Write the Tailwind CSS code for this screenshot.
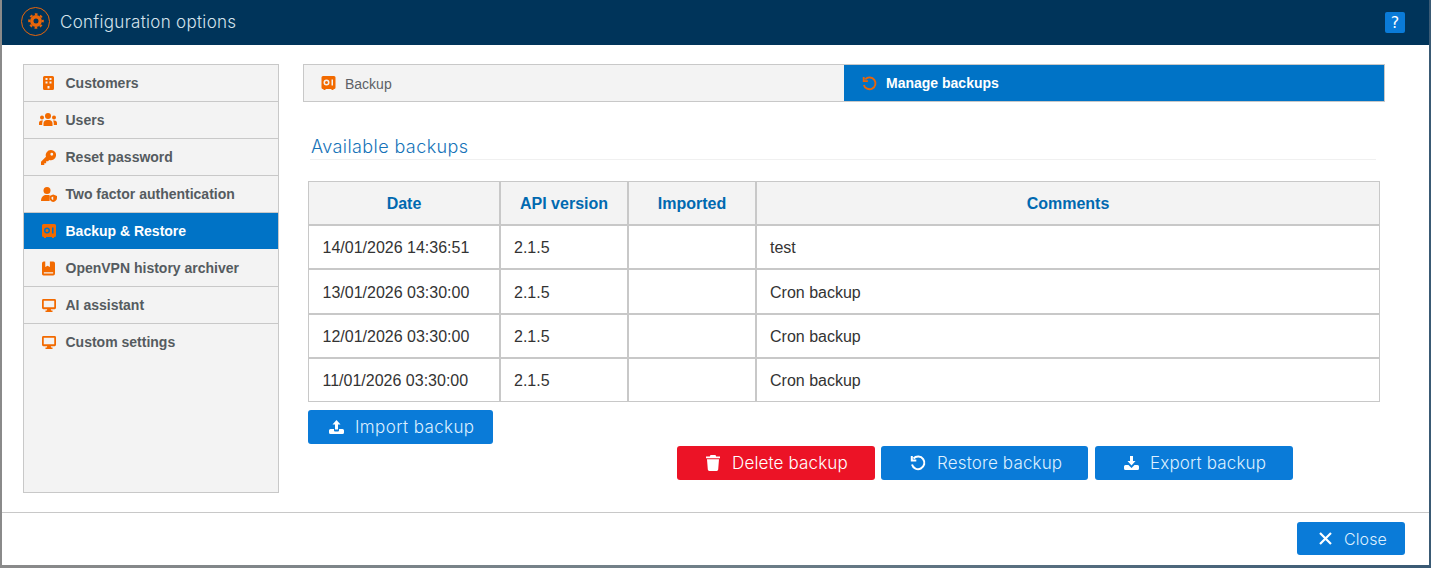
<!DOCTYPE html>
<html>
<head>
<meta charset="utf-8">
<script src="https://cdn.jsdelivr.net/npm/@tailwindcss/browser@4"></script>
</head>
<body class="w-[1431px] h-[568px] overflow-hidden bg-linear-to-r from-[#8a8a8a] via-[#6f7f88] to-[#3a5a74] font-['Liberation_Sans',sans-serif]">
<div class="ml-[2px] w-[1427px] h-[565px] bg-white flex flex-col">
  <header class="h-[45px] shrink-0 bg-[#00345a] flex items-center pl-[19px] pr-[24px]">
    <span class="w-[29px] h-[29px] mb-[3px] rounded-full border border-[#e8650a] flex items-center justify-center">
      <svg class="w-[16px] h-[16px]" viewBox="0 0 16 16"><g fill="none" stroke="#e8650a"><circle cx="8" cy="8" r="4.200" stroke-width="3.400"/><circle cx="8" cy="8" r="6.800" stroke-width="2" stroke-dasharray="2.700 2.640" stroke-dashoffset="1.350"/></g></svg>
    </span>
    <span class="ml-[10px] text-[17px] tracking-[0.3px] font-light text-[#d5e3ec] font-['Inter',sans-serif]">Configuration options</span>
    <span class="ml-auto w-[20px] h-[21px] rounded-[2px] bg-[#0a7bd8] flex items-center justify-center text-white text-[16px] font-['DejaVu_Sans',sans-serif]">?</span>
  </header>

  <main class="flex-1 flex pl-[21px] pr-[44px] pt-[19px] gap-[24px] min-h-0">
    <nav class="w-[256px] h-[429px] shrink-0 bg-[#f3f3f3] border border-[#c8c8c8] flex flex-col text-[14px] font-bold text-[#555b60]">
      <a class="h-[37px] shrink-0 flex items-center border-b border-[#c8c8c8]"><span class="w-[41.500px] flex justify-end pr-[11.500px]"><svg class="w-[11px] h-[14px]" viewBox="0 0 11 14"><path fill="#f26a00" fill-rule="evenodd" d="M1.500 0h8A1.500 1.500 0 0 1 11 1.500v11A1.500 1.500 0 0 1 9.500 14h-8A1.500 1.500 0 0 1 0 12.500v-11A1.500 1.500 0 0 1 1.500 0zM2.500 2v2h2V2zM6.500 2v2h2V2zM2.500 5.500v2h2v-2zM6.500 5.500v2h2v-2zM4.500 10v2.500h2V10z"/></svg></span>Customers</a>
      <a class="h-[37px] shrink-0 flex items-center border-b border-[#c8c8c8]"><span class="w-[41.500px] flex justify-end pr-[8.500px]"><svg class="w-[18px] h-[14px]" viewBox="0 0 18 14"><g fill="#f26a00"><circle cx="9" cy="3" r="3"/><path d="M4.500 13v-2.500C4.500 8.500 6 7 8 7h2c2 0 3.500 1.500 3.500 3.500V13z"/><circle cx="3" cy="4.500" r="2"/><circle cx="15" cy="4.500" r="2"/><path d="M0 12v-2c0-1.500 1-2.500 2.500-2.500H4C3.400 8.300 3.200 9.300 3.200 12zM18 12v-2c0-1.500-1-2.500-2.500-2.500H14c.6.8.8 1.800.8 4.500z"/></g></svg></span>Users</a>
      <a class="h-[37px] shrink-0 flex items-center border-b border-[#c8c8c8]"><span class="w-[41.500px] flex justify-end pr-[9.500px]"><svg class="w-[15px] h-[15px]" viewBox="0 0 16 16"><path fill="#f26a00" fill-rule="evenodd" d="M10.500 0a5.500 5.500 0 1 1-1.700 10.700L7.500 12H5.500v2H3.500v2H0v-3.500l5.300-5.300A5.500 5.500 0 0 1 10.500 0zM11.500 3a1.500 1.500 0 1 0 0 3 1.500 1.500 0 0 0 0-3z"/></svg></span>Reset password</a>
      <a class="h-[37px] shrink-0 flex items-center border-b border-[#c8c8c8]"><span class="w-[41.500px] flex justify-end pr-[8.500px]"><svg class="w-[16px] h-[15px]" viewBox="0 0 16 15"><g fill="#f26a00"><circle cx="6" cy="3.500" r="3.500"/><path d="M0 14c0-3.500 2-6 5-6h2.500c.4 0 .8.100 1.100.200V14z"/><path fill-rule="evenodd" d="M12.200 7.500 16 9v2c0 2-1.500 3.500-3.800 4-2.300-.5-3.700-2-3.700-4V9zM12.200 9.500 10.500 10.200v.9c0 1 .6 1.700 1.700 2z"/></g></svg></span>Two factor authentication</a>
      <a class="h-[37px] shrink-0 flex items-center bg-[#0073c6] text-white border-b border-[#f3f3f3]"><span class="w-[41.500px] flex justify-end pr-[9.500px]"><svg class="w-[14px] h-[14px]" viewBox="0 0 14 14"><path fill="#f26a00" fill-rule="evenodd" d="M1.500 0h11A1.500 1.500 0 0 1 14 1.500v10a1.500 1.500 0 0 1-1.500 1.500h-.5v1h-2v-1H4v1H2v-1h-.5A1.500 1.500 0 0 1 0 11.500v-10A1.500 1.500 0 0 1 1.500 0zM5 3.500a3 3 0 1 0 0 6 3 3 0 0 0 0-6zM5 5a1.500 1.500 0 1 1 0 3 1.500 1.500 0 0 1 0-3zM10 3.500v6h1.500v-6z"/></svg></span>Backup &amp; Restore</a>
      <a class="h-[37px] shrink-0 flex items-center border-b border-[#c8c8c8]"><span class="w-[41.500px] flex justify-end pr-[10.500px]"><svg class="w-[13px] h-[15px]" viewBox="0 0 14 15"><path fill="#f26a00" fill-rule="evenodd" d="M2 0h1.500v6L6 4.500 8.500 6V0H12a2 2 0 0 1 2 2v11a2 2 0 0 1-2 2H1.500A1.500 1.500 0 0 1 0 13.500V2a2 2 0 0 1 2-2zM2 11.500V13h10v-1.500z"/></svg></span>OpenVPN history archiver</a>
      <a class="h-[37px] shrink-0 flex items-center border-b border-[#c8c8c8]"><span class="w-[41.500px] flex justify-end pr-[9.500px]"><svg class="w-[14px] h-[13px]" viewBox="0 0 16 14" preserveAspectRatio="none"><path fill="#f26a00" fill-rule="evenodd" d="M1.500 0h13A1.500 1.500 0 0 1 16 1.500v8a1.500 1.500 0 0 1-1.500 1.500H10l.5 1.500H12V14H4v-1.500h1.500L6 11H1.500A1.500 1.500 0 0 1 0 9.500v-8A1.500 1.500 0 0 1 1.500 0zM2 2v7h12V2z"/></svg></span>AI assistant</a>
      <a class="h-[37px] shrink-0 flex items-center"><span class="w-[41.500px] flex justify-end pr-[9.500px]"><svg class="w-[14px] h-[13px]" viewBox="0 0 16 14" preserveAspectRatio="none"><path fill="#f26a00" fill-rule="evenodd" d="M1.500 0h13A1.500 1.500 0 0 1 16 1.500v8a1.500 1.500 0 0 1-1.500 1.500H10l.5 1.500H12V14H4v-1.500h1.500L6 11H1.500A1.500 1.500 0 0 1 0 9.500v-8A1.500 1.500 0 0 1 1.500 0zM2 2v7h12V2z"/></svg></span>Custom settings</a>
    </nav>

    <section class="w-[1082px] shrink-0 flex flex-col">
      <div class="h-[38px] flex border border-[#c8c8c8] text-[14px]">
        <div class="w-[540px] bg-[#f3f3f3] flex items-center pl-[17px] text-[#5c6166]">
          <svg class="w-[15px] h-[14px] mr-[9px]" viewBox="0 0 14 14"><path fill="#f26a00" fill-rule="evenodd" d="M1.500 0h11A1.500 1.500 0 0 1 14 1.500v10a1.500 1.500 0 0 1-1.500 1.500h-.5v1h-2v-1H4v1H2v-1h-.5A1.500 1.500 0 0 1 0 11.500v-10A1.500 1.500 0 0 1 1.500 0zM5 3.500a3 3 0 1 0 0 6 3 3 0 0 0 0-6zM5 5a1.500 1.500 0 1 1 0 3 1.500 1.500 0 0 1 0-3zM10 3.500v6h1.500v-6z"/></svg>
          <span class="pt-[2px]">Backup</span>
        </div>
        <div class="flex-1 bg-[#0073c6] flex items-center pl-[18px] font-bold text-white">
          <svg class="w-[15px] h-[15px] mr-[9px]" viewBox="0 0 16 16"><path fill="none" stroke="#e8650a" stroke-width="2" d="M3.500 3.500 A6.300 6.300 0 1 1 2 9.500M1.800 1v4.500h4.500"/></svg>
          Manage backups
        </div>
      </div>

      <div class="ml-[7px] mr-[9px] mt-[33px] h-[25px] pl-[1px] border-b border-[#f0f0f0] text-[#1673b8] text-[18px] font-light tracking-[0.4px] leading-[24px] font-['Inter',sans-serif]">Available backups</div>

      <table class="ml-[5px] mt-[21px] w-[1072px] border-separate border-spacing-0 table-fixed text-[16px] text-[#333]">
        <colgroup><col class="w-[192px]"><col class="w-[128px]"><col class="w-[128px]"><col></colgroup>
        <thead>
          <tr class="h-[44px] bg-[#f3f3f3] text-[#0069b0] font-bold">
            <th class="border border-[#c8c8c8] font-bold pt-[2px]">Date</th><th class="border border-[#c8c8c8] font-bold pt-[2px]">API version</th><th class="border border-[#c8c8c8] font-bold pt-[2px]">Imported</th><th class="border border-[#c8c8c8] font-bold pt-[2px]">Comments</th>
          </tr>
        </thead>
        <tbody>
          <tr class="h-[44px]"><td class="border border-[#c8c8c8] pl-[13.500px] pt-[2px]">14/01/2026 14:36:51</td><td class="border border-[#c8c8c8] pl-[13px] pt-[2px]">2.1.5</td><td class="border border-[#c8c8c8]"></td><td class="border border-[#c8c8c8] pl-[13px] pt-[2px]">test</td></tr>
          <tr class="h-[45px]"><td class="border border-[#c8c8c8] pl-[13.500px] pt-[2px]">13/01/2026 03:30:00</td><td class="border border-[#c8c8c8] pl-[13px] pt-[2px]">2.1.5</td><td class="border border-[#c8c8c8]"></td><td class="border border-[#c8c8c8] pl-[13px] pt-[2px]">Cron backup</td></tr>
          <tr class="h-[44px]"><td class="border border-[#c8c8c8] pl-[13.500px] pt-[2px]">12/01/2026 03:30:00</td><td class="border border-[#c8c8c8] pl-[13px] pt-[2px]">2.1.5</td><td class="border border-[#c8c8c8]"></td><td class="border border-[#c8c8c8] pl-[13px] pt-[2px]">Cron backup</td></tr>
          <tr class="h-[44px]"><td class="border border-[#c8c8c8] pl-[13.500px] pt-[2px]">11/01/2026 03:30:00</td><td class="border border-[#c8c8c8] pl-[13px] pt-[2px]">2.1.5</td><td class="border border-[#c8c8c8]"></td><td class="border border-[#c8c8c8] pl-[13px] pt-[2px]">Cron backup</td></tr>
        </tbody>
      </table>

      <div class="ml-[5px] mt-[8px]">
        <button class="w-[185px] h-[34px] rounded-[3px] bg-[#0a7bd8] text-[#dcefff] text-[17px] font-light tracking-[0.4px] font-['Inter',sans-serif] flex items-center pl-[21px]">
          <svg class="w-[15px] h-[14px] mr-[11px]" viewBox="0 0 15 14"><path fill="#fff" d="M7.500 0 11.500 4.500H9V9.500H6V4.500H3.500zM1.500 9H5v1.500a1 1 0 0 0 1 1h3a1 1 0 0 0 1-1V9h3.500A1.500 1.500 0 0 1 15 10.500v2a1.500 1.500 0 0 1-1.500 1.500h-12A1.500 1.500 0 0 1 0 12.500v-2A1.500 1.500 0 0 1 1.500 9z"/></svg>
          <span class="pt-[2px]">Import backup</span>
        </button>
      </div>
      <div class="ml-[374px] mt-[2px] flex gap-[6px] text-[17px] font-light tracking-[0.15px] font-['Inter',sans-serif]">
        <button class="w-[198px] h-[34px] rounded-[3px] bg-[#ec1326] text-white flex items-center pl-[29px]">
          <svg class="w-[14px] h-[16px] mr-[12px]" viewBox="0 0 14 16"><path fill="#fff" d="M4.500 0h5L10.200 1.500H14V3.200H0V1.500H3.800zM1 4.200h12l-.8 10.400A1.500 1.500 0 0 1 10.700 16H3.300a1.500 1.500 0 0 1-1.500-1.400z"/></svg>
          <span class="pt-[2px]">Delete backup</span>
        </button>
        <button class="w-[207px] h-[34px] rounded-[3px] bg-[#0a7bd8] text-[#dcefff] flex items-center pl-[29px]">
          <svg class="w-[16px] h-[16px] mr-[11px]" viewBox="0 0 16 16"><path fill="none" stroke="#fff" stroke-width="2" d="M3.500 3.500 A6.300 6.300 0 1 1 2 9.500M1.800 1v4.500h4.500"/></svg>
          <span class="pt-[2px]">Restore backup</span>
        </button>
        <button class="ml-[1px] w-[198px] h-[34px] rounded-[3px] bg-[#0a7bd8] text-[#dcefff] flex items-center pl-[29px]">
          <svg class="w-[15px] h-[14px] mr-[11px]" viewBox="0 0 15 14"><path fill="#fff" d="M6 0H9V5H11.500L7.500 9.500 3.500 5H6zM1.500 9H4.500L7.500 12 10.500 9h3A1.500 1.500 0 0 1 15 10.500v2a1.500 1.500 0 0 1-1.500 1.500h-12A1.500 1.500 0 0 1 0 12.500v-2A1.500 1.500 0 0 1 1.500 9z"/></svg>
          <span class="pt-[2px]">Export backup</span>
        </button>
      </div>
    </section>
  </main>

  <footer class="h-[53px] shrink-0 border-t border-[#c8c8c8] flex items-center justify-end pr-[24px] pb-[2px]">
    <button class="w-[108px] h-[33px] rounded-[3px] bg-[#0a7bd8] text-[#dcefff] text-[16px] font-light tracking-[0.1px] font-['Inter',sans-serif] flex items-center pl-[22px]">
      <svg class="w-[13px] h-[13px] mr-[12px]" viewBox="0 0 13 13"><path stroke="#fff" stroke-width="2.200" d="M1 1l11 11M12 1 1 12"/></svg>
      <span class="pt-[2px]">Close</span>
    </button>
  </footer>
</div>
</body>
</html>
